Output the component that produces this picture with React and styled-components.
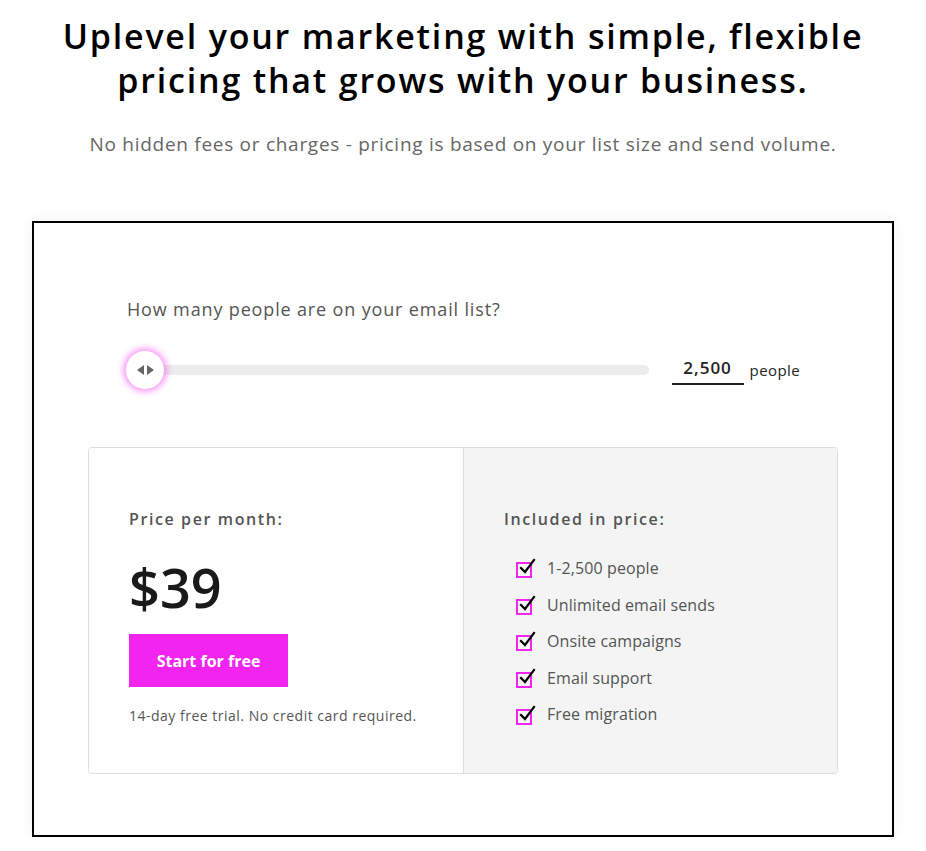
import React, { useState } from 'react';
import styled, { createGlobalStyle } from 'styled-components';

const GlobalStyle = createGlobalStyle`
  body {
    margin: 0;
    background: #fff;
    font-family: "Open Sans", Lato, sans-serif;
    color: #222;
  }
`;

const Page = styled.div`
  display: flex;
  flex-direction: column;
  align-items: center;
  padding-top: 14px;
`;

const Title = styled.h1`
  margin: 0;
  font-size: 34px;
  line-height: 44px;
  font-weight: 600;
  letter-spacing: 1.8px;
  text-align: center;
  color: #000;
`;

const SubTitle = styled.p`
  margin: 29px 0 0;
  font-size: 19px;
  letter-spacing: 0.72px;
  color: #666;
  text-align: center;
`;

const Card = styled.div`
  box-sizing: border-box;
  width: 862px;
  margin-top: 64px;
  border: 2px solid #000;
  padding: 74px 54px 61px;
  box-shadow: 0 0 14px rgba(0, 0, 0, 0.06);
`;

const SliderSection = styled.div`
  padding: 0 38px 0 39px;
  margin-bottom: 62px;
`;

const Question = styled.div`
  font-size: 18px;
  letter-spacing: 0.85px;
  color: #555;
`;

const SliderRow = styled.div`
  display: flex;
  align-items: center;
  margin-top: 33px;
  gap: 23px;
`;

const Track = styled.div`
  position: relative;
  flex: 1;
  height: 10px;
  border-radius: 5px;
  background: #ececec;
`;

const Thumb = styled.div`
  position: absolute;
  left: -1px;
  top: 50%;
  transform: translateY(-50%);
  width: 38px;
  height: 38px;
  border-radius: 50%;
  background: #fff;
  box-shadow: 0 0 6px 3px rgba(242, 36, 239, 0.45);
  display: flex;
  align-items: center;
  justify-content: center;
  gap: 3px;
`;

const Arrow = styled.span`
  width: 0;
  height: 0;
  border-top: 5px solid transparent;
  border-bottom: 5px solid transparent;
  ${({ $dir }) => ($dir === 'left' ? 'border-right: 7px solid #666;' : 'border-left: 7px solid #666;')}
`;

const CountWrap = styled.div`
  display: flex;
  align-items: center;
  gap: 6px;
`;

const CountInput = styled.input`
  width: 72px;
  box-sizing: border-box;
  border: none;
  border-bottom: 2px solid #222;
  outline: none;
  padding: 2px 0 4px;
  font-family: inherit;
  font-size: 17px;
  font-weight: 600;
  letter-spacing: 1px;
  text-align: center;
  color: #222;
  background: transparent;
`;

const Unit = styled.span`
  font-size: 15px;
  letter-spacing: 0.4px;
  color: #222;
`;

const PriceBox = styled.div`
  display: grid;
  grid-template-columns: 1fr 1fr;
  border: 1px solid #dedede;
  border-radius: 4px;
  overflow: hidden;
`;

const Pane = styled.div`
  padding: 59px 40px 46px;
  background: ${({ $shaded }) => ($shaded ? '#f4f4f4' : '#fff')};
  ${({ $shaded }) => $shaded && 'border-left: 1px solid #dedede;'}
`;

const Label = styled.div`
  font-size: 16px;
  line-height: 24px;
  font-weight: 600;
  color: #555;
  letter-spacing: 1.6px;
`;

const Price = styled.div`
  margin-top: 26px;
  font-size: 54px;
  line-height: 60px;
  font-weight: 600;
  color: #1a1a1a;
`;

const CtaButton = styled.button`
  margin-top: 17px;
  width: 159px;
  height: 53px;
  border: none;
  background: #f224ef;
  color: #fff;
  font-family: inherit;
  font-size: 16px;
  font-weight: 700;
  cursor: pointer;
`;

const Fine = styled.div`
  margin-top: 19px;
  font-size: 14px;
  letter-spacing: 0.5px;
  color: #555;
`;

const List = styled.ul`
  list-style: none;
  margin: 25px 0 0;
  padding: 0 0 0 12px;
  display: flex;
  flex-direction: column;
  gap: 12px;
`;

const Item = styled.li`
  display: flex;
  align-items: center;
  gap: 11px;
  font-size: 16px;
  letter-spacing: 0.1px;
  line-height: 24.6px;
  color: #555;
`;

const Check = () => (
  <svg width="20" height="20" viewBox="0 0 20 20">
    <rect x="1" y="5" width="14" height="14" fill="none" stroke="#f224ef" strokeWidth="2" />
    <path d="M5 10 L9 14 L18 2" fill="none" stroke="#000" strokeWidth="2.2" strokeLinecap="square" />
  </svg>
);

const features = [
  '1-2,500 people',
  'Unlimited email sends',
  'Onsite campaigns',
  'Email support',
  'Free migration',
];

const App = () => {
  const [count, setCount] = useState('2,500');

  return (
    <Page>
      <GlobalStyle />
      <Title>
        Uplevel your marketing with simple, flexible
        <br />
        pricing that grows with your business.
      </Title>
      <SubTitle>
        No hidden fees or charges - pricing is based on your list size and send volume.
      </SubTitle>
      <Card>
        <SliderSection>
          <Question>How many people are on your email list?</Question>
          <SliderRow>
            <Track>
              <Thumb>
                <Arrow $dir='left' />
                <Arrow $dir='right' />
              </Thumb>
            </Track>
            <CountWrap>
              <CountInput value={count} onChange={(e) => setCount(e.target.value)} />
              <Unit>people</Unit>
            </CountWrap>
          </SliderRow>
        </SliderSection>
        <PriceBox>
          <Pane>
            <Label>Price per month:</Label>
            <Price>$39</Price>
            <CtaButton>Start for free</CtaButton>
            <Fine>14-day free trial. No credit card required.</Fine>
          </Pane>
          <Pane $shaded>
            <Label>Included in price:</Label>
            <List>
              {features.map((f) => (
                <Item key={f}>
                  <Check />
                  {f}
                </Item>
              ))}
            </List>
          </Pane>
        </PriceBox>
      </Card>
    </Page>
  );
};

export default App;
